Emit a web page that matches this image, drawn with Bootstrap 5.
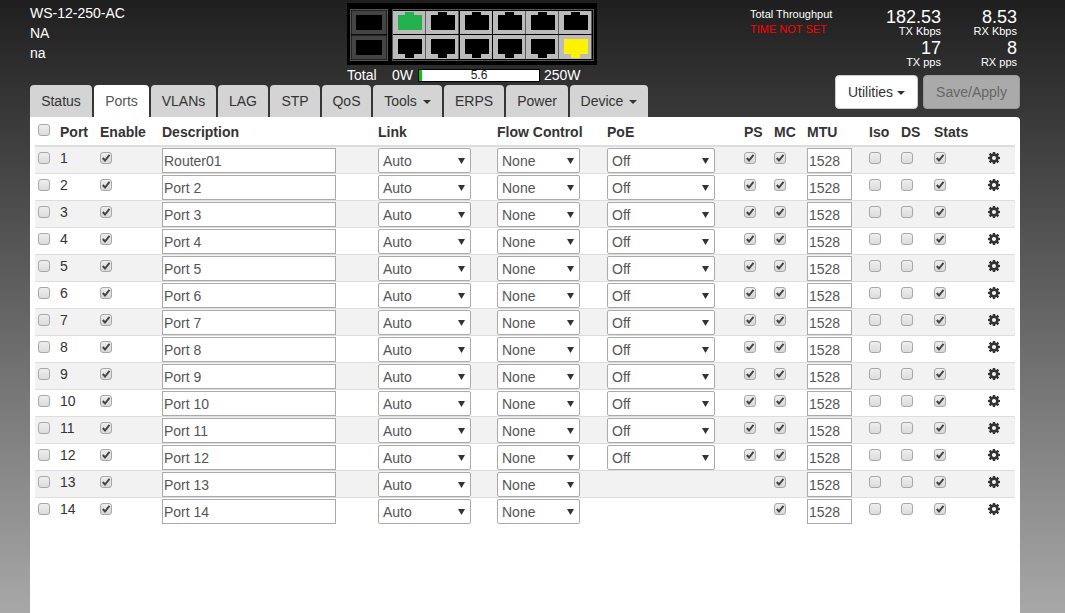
<!DOCTYPE html>
<html lang="en">
<head>
<meta charset="utf-8">
<title>Ports</title>
<link href="https://cdn.jsdelivr.net/npm/bootstrap@5.3.0/dist/css/bootstrap.min.css" rel="stylesheet">
<style>
html,body{height:100%;}
body{margin:0;height:613px;overflow:hidden;font-family:"Liberation Sans",Arial,sans-serif;font-size:14px;color:#333;background:linear-gradient(#1f1f1f,#a8a8a8);padding:0 45px 0 30px;}
.top-band{height:85px;color:#fff;}
.who{width:317px;line-height:20px;padding-top:3px;}
.sw-block{width:250px;padding-top:3px;margin-right:153px;}
.sw-art{display:block;width:250px;height:62px;}
.power-row{height:20px;line-height:20px;}
.power-label{width:45px;}
.power-min{width:26px;}
.power-bar{width:122px;height:13px;border:1px solid #000;background:#fff;color:#222;font-size:12px;line-height:11px;text-align:center;margin-right:4px;}
.power-bar i{left:0;top:0;bottom:0;background:#0c0;display:block;}
.stats-side{width:270px;padding-right:3px;}
.tp-title{width:85px;font-size:11px;line-height:15px;padding-top:7px;}
.tp-warn{color:#f00;}
.tp-col{width:76px;text-align:right;padding-top:8px;}
.tp-num{font-size:18px;line-height:18px;}
.tp-num+.tp-unit+.tp-num{margin-top:2px;}
.tp-unit{font-size:11px;line-height:11px;}
.tab-line{height:32px;}
.nav-tabs.port-tabs{border:0;gap:2px;flex-wrap:nowrap;}
.port-tabs .nav-link{height:32px;padding:6px 0;line-height:20px;background:#d4d4d4;color:#333;border:0;border-radius:4px 4px 0 0;margin:0;text-align:center;}
.port-tabs .nav-link.active{background:#fff;color:#555;}
.port-tabs .dropdown-toggle::after{margin-left:6px;vertical-align:2px;border-top-width:4px;border-left-width:4px;border-right-width:4px;}
.port-tabs li:nth-child(1) .nav-link{width:62px;}
.port-tabs li:nth-child(2) .nav-link{width:55px;}
.port-tabs li:nth-child(3) .nav-link{width:65px;}
.port-tabs li:nth-child(4) .nav-link{width:50px;}
.port-tabs li:nth-child(5) .nav-link{width:50px;}
.port-tabs li:nth-child(6) .nav-link{width:49px;}
.port-tabs li:nth-child(7) .nav-link{width:69px;}
.port-tabs li:nth-child(8) .nav-link{width:60px;}
.port-tabs li:nth-child(9) .nav-link{width:62px;}
.port-tabs li:nth-child(10) .nav-link{width:78px;}
.act-btns{gap:5px;margin-top:-10px;height:34px;}
.act-btns .btn{height:34px;font-size:14px;padding:6px 0;line-height:20px;border-radius:4px;}
.btn-util{background:#fff;border:1px solid #ccc;color:#333;width:83px;}
.btn-util::after{margin-left:4px;vertical-align:2px;border-top-width:4px;border-left-width:4px;border-right-width:4px;}
.btn-save,.btn-save:disabled{background:#aaa;border:1px solid #999;color:#666;opacity:1;width:97px;}
.sheet{background:#fff;border-radius:0 4px 0 0;padding:0 5px;height:496px;}
.port-grid{width:980px;table-layout:fixed;margin:0;border-collapse:collapse;color:#333;--bs-table-bg:transparent;--bs-table-striped-bg:#f2f2f2;--bs-table-striped-color:#333;--bs-table-color:#333;}
.port-grid>*>tr>*{padding:1px 3px 0;border:0;border-bottom:1px solid #ddd;vertical-align:top;}
.port-grid thead th{height:29px;padding-top:8px;line-height:15px;border-bottom:2px solid #ddd;white-space:nowrap;}
.port-grid tbody td{height:27px;line-height:20px;}
.port-grid tbody tr:nth-child(odd)>*{background:#f2f2f2;}
.port-grid tbody tr:last-child>*{border-bottom:0;}
.port-grid input[type=text]{display:block;border:1px solid #aaa;background:#fff;color:#555;font-size:14px;height:25px;padding:0 1px;margin:0;border-radius:0;width:174px;font-family:inherit;outline:0;}
.port-grid input.mtu-box{width:45px;}
.port-grid select{appearance:none;display:block;border:1px solid #aaa;border-radius:2px;color:#555;font-size:14px;height:25px;padding:1px 4px 0;margin:0;font-family:inherit;background:#fff url("data:image/svg+xml,%3Csvg xmlns='http://www.w3.org/2000/svg' width='7' height='6'%3E%3Cpath d='M0 0h7L3.500 6z' fill='%23333'/%3E%3C/svg%3E") no-repeat right 5px center;}
.sel-link{width:93px;}
.sel-flow{width:83px;}
.sel-poe{width:108px;}
.tick{appearance:none;display:block;width:12px;height:12px;margin:4px 0 0 0;border:1px solid #a8a8a8;border-radius:3px;background:linear-gradient(#eee,#dcdcdc);}
thead .tick{margin-top:-1px;}
.tick:checked{background:url("data:image/svg+xml,%3Csvg xmlns='http://www.w3.org/2000/svg' width='10' height='10'%3E%3Cpath d='M1.800 5l2.200 2.500L8.500 1.800' fill='none' stroke='%23444' stroke-width='2'/%3E%3C/svg%3E") no-repeat center,linear-gradient(#eee,#d8d8d8);}
.gear{display:block;margin:4px 0 0 0;}
</style>
</head>
<body>
<svg width="0" height="0" class="position-absolute">
  <defs>
    <path id="jack-up" d="M5 4h7V1h9v3h8v15H5z"/>
    <path id="jack-down" d="M5 4h24v15h-8v4h-9v-4H5z"/>
    <symbol id="cog" viewBox="0 0 14 14"><path fill="#333" fill-rule="evenodd" d="M5.700 0h2.600l.3 1.800 1 .4L11.200 1 13 2.800l-1.200 1.600.4 1 1.800.3v2.600l-1.800.3-.4 1L13 11.200 11.200 13l-1.600-1.200-1 .4-.3 1.800H5.700l-.3-1.800-1-.4L2.800 13 1 11.200l1.200-1.600-.4-1L0 8.300V5.700l1.800-.3.4-1L1 2.800 2.800 1l1.600 1.200 1-.4zM7 4.600a2.400 2.400 0 1 0 0 4.800 2.400 2.400 0 0 0 0-4.800z"/></symbol>
  </defs>
</svg>

<div class="top-band d-flex">
  <div class="who">WS-12-250-AC<br>NA<br>na</div>
  <div class="sw-block">
    <svg class="sw-art" viewBox="0 0 250 62">
      <rect width="250" height="62" fill="#000"/>
      <rect x="4" y="7" width="36" height="25" fill="#444" stroke="#000"/>
      <rect x="4" y="32" width="36" height="25" fill="#444" stroke="#000"/>
      <rect x="3.500" y="6.500" width="37" height="51" fill="none" stroke="#555"/>
      <rect x="9" y="12" width="26" height="15" fill="#000"/>
      <rect x="9" y="37" width="26" height="15" fill="#000"/>
      <rect x="45.500" y="6.500" width="201" height="51" fill="none" stroke="#555"/>
      <g fill="#bbb">
        <rect x="46" y="8" width="32.500" height="23"/><rect x="79" y="8" width="32.500" height="23"/><rect x="113" y="8" width="32" height="23"/><rect x="146" y="8" width="32.500" height="23"/><rect x="179" y="8" width="32.500" height="23"/><rect x="212" y="8" width="32.500" height="23"/>
        <rect x="46" y="32" width="32.500" height="24"/><rect x="79" y="32" width="32.500" height="24"/><rect x="113" y="32" width="32" height="24"/><rect x="146" y="32" width="32.500" height="24"/><rect x="179" y="32" width="32.500" height="24"/><rect x="212" y="32" width="32.500" height="24"/>
      </g>
      <use href="#jack-up" x="46" y="8" fill="#22b14c"/>
      <use href="#jack-up" x="79" y="8" fill="#000"/>
      <use href="#jack-up" x="113" y="8" fill="#000"/>
      <use href="#jack-up" x="146" y="8" fill="#000"/>
      <use href="#jack-up" x="179" y="8" fill="#000"/>
      <use href="#jack-up" x="212" y="8" fill="#000"/>
      <use href="#jack-down" x="46" y="32" fill="#000"/>
      <use href="#jack-down" x="79" y="32" fill="#000"/>
      <use href="#jack-down" x="113" y="32" fill="#000"/>
      <use href="#jack-down" x="146" y="32" fill="#000"/>
      <use href="#jack-down" x="179" y="32" fill="#000"/>
      <use href="#jack-down" x="212" y="32" fill="#fff200"/>
    </svg>
    <div class="power-row d-flex align-items-center">
      <span class="power-label">Total</span>
      <span class="power-min">0W</span>
      <span class="power-bar position-relative"><i class="position-absolute" style="width:2.500%"></i>5.6</span>
      <span>250W</span>
    </div>
  </div>
  <div class="stats-side d-flex">
    <div class="tp-title me-auto">Total Throughput<br><span class="tp-warn">TIME NOT SET</span></div>
    <div class="tp-col">
      <div class="tp-num">182.53</div><div class="tp-unit">TX Kbps</div>
      <div class="tp-num">17</div><div class="tp-unit">TX pps</div>
    </div>
    <div class="tp-col">
      <div class="tp-num">8.53</div><div class="tp-unit">RX Kbps</div>
      <div class="tp-num">8</div><div class="tp-unit">RX pps</div>
    </div>
  </div>
</div>

<div class="tab-line d-flex justify-content-between">
  <ul class="nav nav-tabs port-tabs">
    <li class="nav-item"><a class="nav-link" href="#">Status</a></li>
    <li class="nav-item"><a class="nav-link active" href="#">Ports</a></li>
    <li class="nav-item"><a class="nav-link" href="#">VLANs</a></li>
    <li class="nav-item"><a class="nav-link" href="#">LAG</a></li>
    <li class="nav-item"><a class="nav-link" href="#">STP</a></li>
    <li class="nav-item"><a class="nav-link" href="#">QoS</a></li>
    <li class="nav-item"><a class="nav-link dropdown-toggle" href="#">Tools</a></li>
    <li class="nav-item"><a class="nav-link" href="#">ERPS</a></li>
    <li class="nav-item"><a class="nav-link" href="#">Power</a></li>
    <li class="nav-item"><a class="nav-link dropdown-toggle" href="#">Device</a></li>
  </ul>
  <div class="act-btns d-flex">
    <button class="btn btn-util dropdown-toggle" type="button">Utilities</button>
    <button class="btn btn-save" type="button" disabled>Save/Apply</button>
  </div>
</div>

<div class="sheet">
  <table class="table table-striped port-grid">
    <colgroup>
      <col style="width:22px"><col style="width:40px"><col style="width:62px"><col style="width:216px"><col style="width:119px"><col style="width:110px"><col style="width:137px"><col style="width:30px"><col style="width:33px"><col style="width:62px"><col style="width:32px"><col style="width:33px"><col style="width:54px"><col>
    </colgroup>
    <thead>
      <tr><th><input class="tick" type="checkbox" aria-label="all"></th><th>Port</th><th>Enable</th><th>Description</th><th>Link</th><th>Flow Control</th><th>PoE</th><th>PS</th><th>MC</th><th>MTU</th><th>Iso</th><th>DS</th><th>Stats</th><th></th></tr>
    </thead>
    <tbody id="rows"></tbody>
  </table>
</div>

<script>
var names=["Router01"];
for(var i=2;i<=14;i++)names.push("Port "+i);
var html="";
names.forEach(function(name,idx){
  var n=idx+1;
  var hasPoe=n<=12;
  html+="<tr><td><input class='tick' type='checkbox'></td><td>"+n+"</td><td><input class='tick' type='checkbox' checked></td>"
  +"<td><input type='text' value='"+name+"'></td>"
  +"<td><select class='sel-link'><option>Auto</option></select></td>"
  +"<td><select class='sel-flow'><option>None</option></select></td>"
  +"<td>"+(hasPoe?"<select class='sel-poe'><option>Off</option></select>":"")+"</td>"
  +"<td>"+(hasPoe?"<input class='tick' type='checkbox' checked>":"")+"</td>"
  +"<td><input class='tick' type='checkbox' checked></td>"
  +"<td><input class='mtu-box' type='text' value='1528'></td>"
  +"<td><input class='tick' type='checkbox'></td><td><input class='tick' type='checkbox'></td><td><input class='tick' type='checkbox' checked></td>"
  +"<td><svg class='gear' width='12' height='12'><use href='#cog'/></svg></td></tr>";
});
document.getElementById("rows").innerHTML=html;
</script>
<script src="https://cdn.jsdelivr.net/npm/bootstrap@5.3.0/dist/js/bootstrap.bundle.min.js"></script>
</body>
</html>
